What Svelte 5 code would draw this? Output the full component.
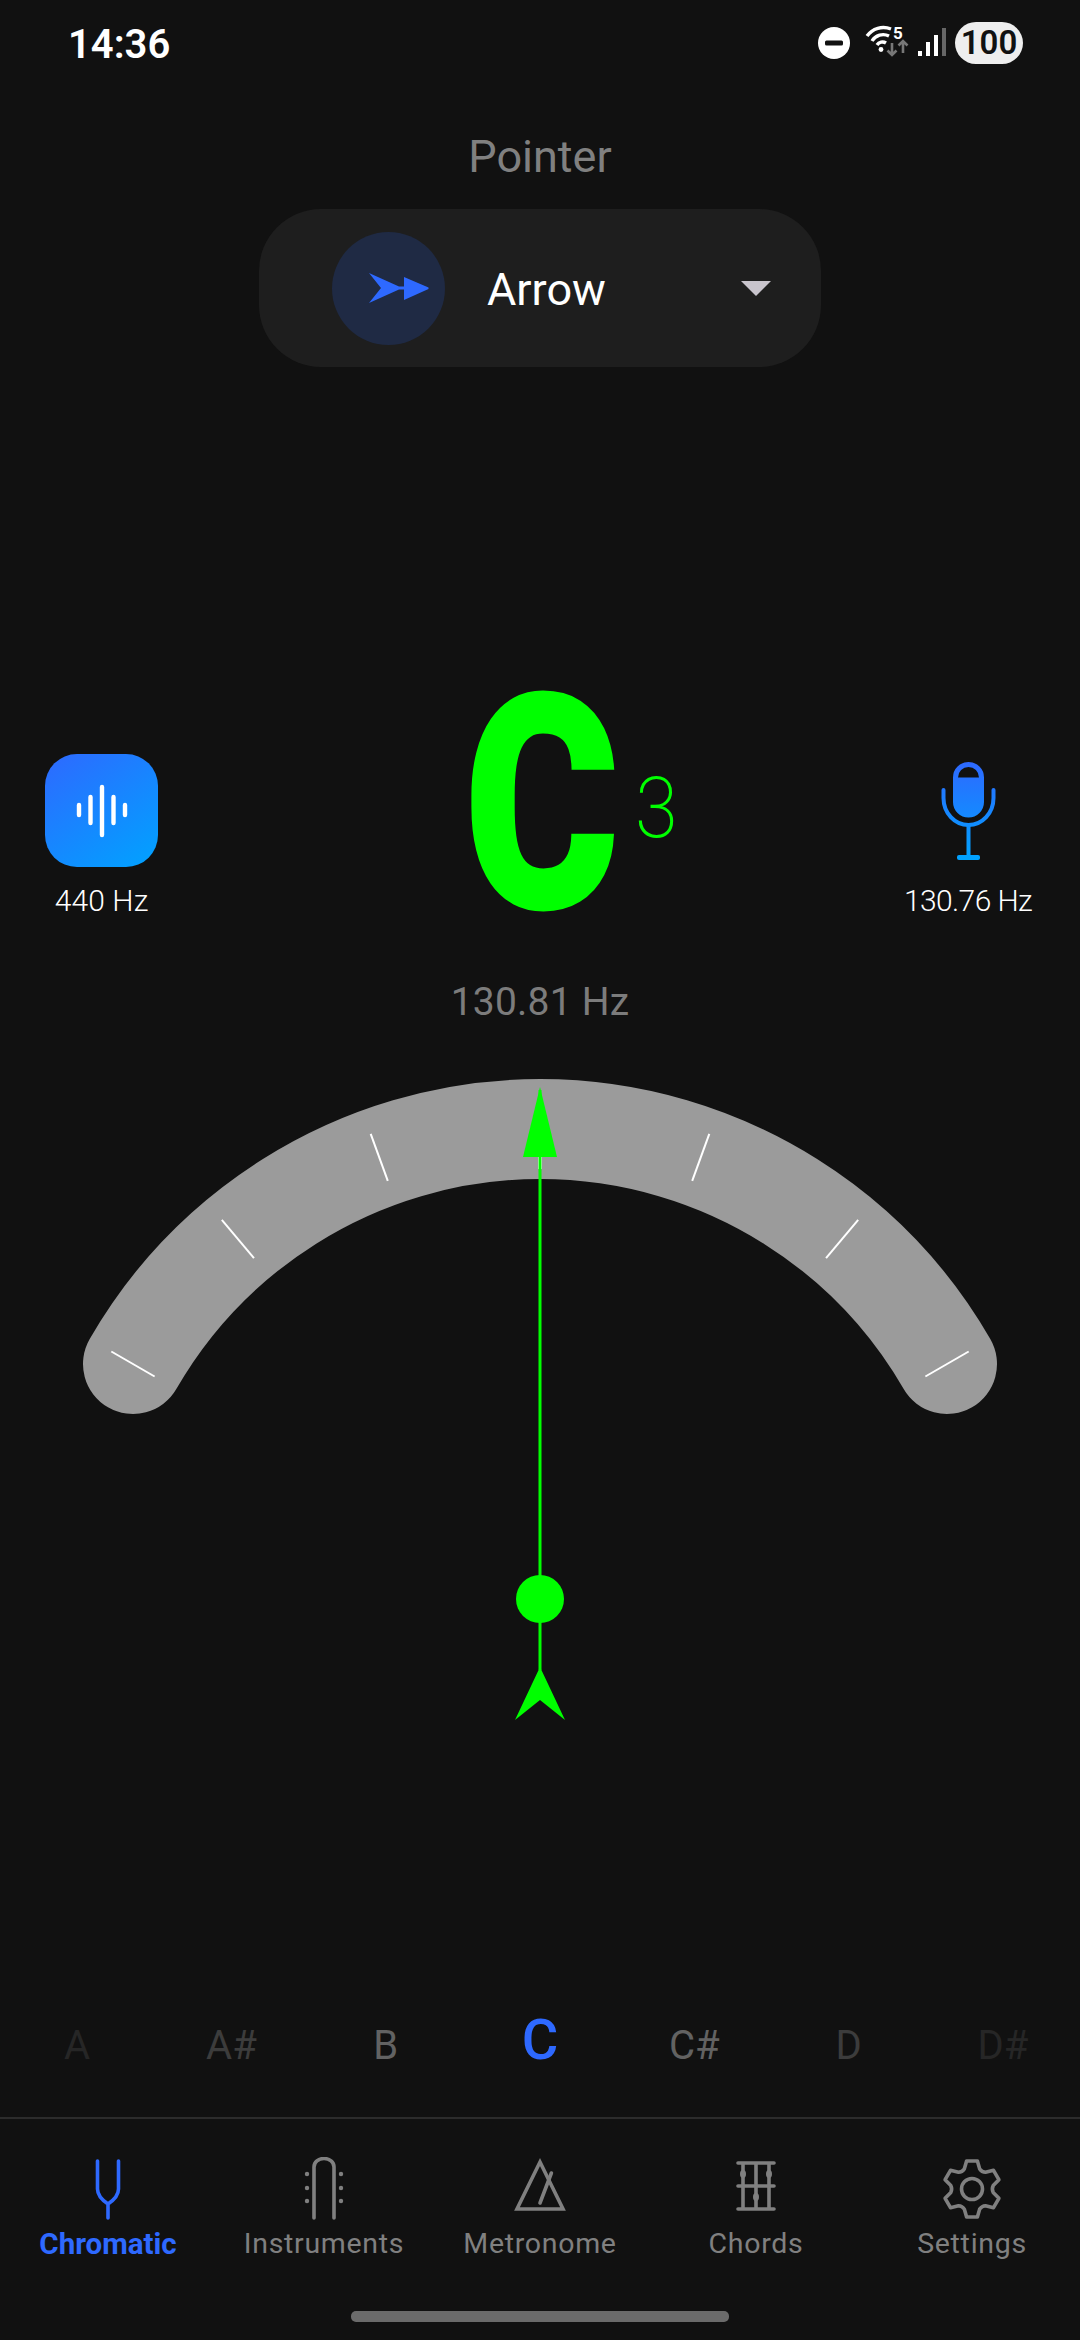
<script>
  const notes = [
    { name: 'A', cls: 'far' },
    { name: 'A#', cls: 'mid' },
    { name: 'B', cls: 'near' },
    { name: 'C', cls: 'active' },
    { name: 'C#', cls: 'near' },
    { name: 'D', cls: 'mid' },
    { name: 'D#', cls: 'far' },
  ];

  const cx = 540;
  const cy = 1599;
  const ticks = [-60, -40, -20, 20, 40, 60].map((deg) => {
    const a = (deg * Math.PI) / 180;
    return {
      x1: cx + 445 * Math.sin(a),
      y1: cy - 445 * Math.cos(a),
      x2: cx + 495 * Math.sin(a),
      y2: cy - 495 * Math.cos(a),
    };
  });

  // settings cog, six teeth starting from the top
  function gearPath() {
    const pt = (r, deg) => {
      const a = ((deg - 90) * Math.PI) / 180;
      return `${(30 + r * Math.cos(a)).toFixed(1)} ${(30 + r * Math.sin(a)).toFixed(1)}`;
    };
    let d = '';
    for (let i = 0; i < 6; i++) {
      const t = i * 60;
      d += `${i ? 'L' : 'M'}${pt(21.5, t - 21)} L${pt(28.5, t - 11)} L${pt(28.5, t + 11)} L${pt(21.5, t + 21)} `;
      d += `Q${pt(19.5, t + 30)} ${pt(21.5, t + 39)} `;
    }
    return d + 'Z';
  }
</script>

<div class="screen">
  <div class="status">
    <span class="time">14:36</span>
    <div class="status-icons">
      <svg class="dnd" width="32" height="32" viewBox="0 0 32 32">
        <circle cx="16" cy="16" r="16" fill="#fff" />
        <rect x="7" y="13.5" width="18" height="5" rx="1.5" fill="#111" />
      </svg>
      <svg class="net" width="44" height="36" viewBox="0 0 44 36">
        <g fill="none" stroke="#fff" stroke-width="3.4" stroke-linecap="butt">
          <path d="M2 11 A20 20 0 0 1 26 4" />
          <path d="M7 16 A13 13 0 0 1 24 11" />
          <path d="M12 20 A6.5 6.5 0 0 1 21 18" />
        </g>
        <circle cx="16" cy="24.5" r="2.4" fill="#fff" />
        <text x="28" y="14" class="net-five">5</text>
        <g fill="none" stroke="#777" stroke-width="2.6">
          <path d="M27 18 V30 M22.5 25.5 L27 30 L31.5 25.5" />
          <path d="M38 28 V16 M33.5 20.5 L38 16 L42.5 20.5" />
        </g>
      </svg>
      <svg class="signal" width="28" height="30" viewBox="0 0 28 30">
        <rect x="0" y="23" width="4" height="5" fill="#fff" />
        <rect x="8" y="14" width="4" height="14" fill="#fff" />
        <rect x="16" y="7" width="4" height="21" fill="#fff" />
        <rect x="24" y="0" width="4" height="28" fill="#666" />
      </svg>
      <span class="battery">100</span>
    </div>
  </div>

  <div class="picker-label">Pointer</div>
  <div class="picker">
    <span class="picker-icon">
      <svg width="62" height="34" viewBox="0 0 62 34">
        <path d="M0 2 L30 15.5 H35 V6 L59.5 16.5 V18 L35 29 V18.5 H30 L0 32 L12 17 Z" fill="#2e69ff" />
      </svg>
    </span>
    <span class="picker-text">Arrow</span>
    <span class="caret"></span>
  </div>

  <div class="tuner">
    <div class="side side-left">
      <div class="ref-btn">
        <svg width="54" height="54" viewBox="0 0 54 54">
          <g stroke="#fff" stroke-width="4.4" stroke-linecap="round">
            <path d="M4 21 V31" />
            <path d="M15.5 13 V39" />
            <path d="M27 3 V51" />
            <path d="M38.5 13 V39" />
            <path d="M50 21 V31" />
          </g>
        </svg>
      </div>
      <span class="side-value wide">440 Hz</span>
    </div>

    <div class="note">
      <span class="note-name">C</span>
      <span class="octave">3</span>
    </div>

    <div class="side side-right">
      <svg class="mic" width="113" height="113" viewBox="0 0 113 113">
        <defs>
          <linearGradient id="micGrad" x1="0" y1="8" x2="0" y2="106" gradientUnits="userSpaceOnUse">
            <stop offset="0" stop-color="#2e69ff" />
            <stop offset="1" stop-color="#00a3ff" />
          </linearGradient>
        </defs>
        <path
          fill-rule="evenodd"
          fill="url(#micGrad)"
          d="M56.5 8 A15.5 15.5 0 0 1 72 23.5 V48 A15.5 15.5 0 0 1 41 48 V23.5 A15.5 15.5 0 0 1 56.5 8 Z M56.5 13 A10.5 10.5 0 0 0 46 23.5 H67 A10.5 10.5 0 0 0 56.5 13 Z"
        />
        <path d="M31.5 36 V44 A25 27 0 0 0 81.5 44 V36" fill="none" stroke="url(#micGrad)" stroke-width="4" stroke-linecap="round" />
        <rect x="54.5" y="70" width="4" height="34" fill="url(#micGrad)" />
        <rect x="45" y="101" width="23" height="5" rx="2" fill="url(#micGrad)" />
      </svg>
      <span class="side-value">130.76 Hz</span>
    </div>
  </div>

  <div class="target-hz">130.81 Hz</div>

  <svg class="gauge" width="1080" height="680" viewBox="0 1060 1080 680">
    <path d="M133 1364 A470 470 0 0 1 947 1364" fill="none" stroke="#9b9b9b" stroke-width="100" stroke-linecap="round" />
    {#each ticks as t}
      <line x1={t.x1} y1={t.y1} x2={t.x2} y2={t.y2} stroke="#fff" stroke-width="2" />
    {/each}
    <rect x="538" y="1150" width="4" height="19" fill="#fff" />
    <rect x="538.5" y="1090" width="3" height="580" fill="#00ff00" />
    <polygon points="540,1087 557,1157 523,1157" fill="#00ff00" />
    <circle cx="540" cy="1599" r="24" fill="#00ff00" />
    <polygon points="540,1667 565,1720 540,1700 515,1720" fill="#00ff00" />
  </svg>

  <div class="notes">
    {#each notes as n}
      <span class="note-cell {n.cls}">{n.name}</span>
    {/each}
  </div>

  <nav class="tabs">
    <div class="tab active">
      <svg width="60" height="64" viewBox="0 0 60 64">
        <path d="M19.5 4 V32 Q19.5 40 30 47 Q40.5 40 40.5 32 V4 M30 47 V61" />
      </svg>
      <span>Chromatic</span>
    </div>
    <div class="tab">
      <svg width="60" height="64" viewBox="0 0 60 64">
        <path d="M20 61 V10 A10 8.5 0 0 1 40 10 V61" />
        <g class="fill">
          <circle cx="13" cy="17" r="2.2" /><circle cx="13" cy="31" r="2.2" /><circle cx="13" cy="44" r="2.2" />
          <circle cx="47" cy="17" r="2.2" /><circle cx="47" cy="31" r="2.2" /><circle cx="47" cy="44" r="2.2" />
        </g>
      </svg>
      <span>Instruments</span>
    </div>
    <div class="tab">
      <svg width="60" height="64" viewBox="0 0 60 64">
        <path d="M30 5 L53 52 H7 Z" />
        <path d="M30 46 L41.4 16" />
      </svg>
      <span>Metronome</span>
    </div>
    <div class="tab">
      <svg width="60" height="64" viewBox="0 0 60 64">
        <path d="M12 6 H48 M12 29 H48 M12 52 H48 M17 6 V52 M30 6 V52 M43 6 V52" />
        <g class="fill">
          <ellipse cx="17" cy="17" rx="3" ry="4" /><ellipse cx="43" cy="17" rx="3" ry="4" /><ellipse cx="30" cy="40" rx="3" ry="4" />
        </g>
      </svg>
      <span>Chords</span>
    </div>
    <div class="tab">
      <svg width="60" height="64" viewBox="0 0 60 60">
        <path d={gearPath()} stroke-linejoin="round" />
        <circle cx="30" cy="30" r="10.5" />
      </svg>
      <span>Settings</span>
    </div>
  </nav>

  <div class="home-bar"></div>
</div>

<style>
  :global(body) {
    background: #111;
  }
  .screen {
    width: 1080px;
    height: 2340px;
    background: #111;
    display: flex;
    flex-direction: column;
    overflow: hidden;
    font-family: Roboto, "Noto Sans", sans-serif;
    color: #fff;
  }

  .status {
    height: 86px;
    flex-shrink: 0;
    display: flex;
    align-items: center;
    justify-content: space-between;
    padding: 0 57px 0 68px;
  }
  .time {
    font-size: 40px;
    font-weight: 600;
    margin-top: 2px;
  }
  .status-icons {
    display: flex;
    align-items: center;
  }
  .net {
    margin-left: 15px;
    overflow: visible;
  }
  .net-five {
    font-size: 17px;
    font-weight: 700;
    fill: #fff;
  }
  .signal {
    margin-left: 9px;
  }
  .battery {
    margin-left: 9px;
    width: 68px;
    height: 42px;
    border-radius: 21px;
    background: #eee;
    color: #111;
    font-size: 33px;
    font-weight: 600;
    line-height: 42px;
    text-align: center;
  }

  .picker-label {
    margin-top: 45px;
    height: 52px;
    line-height: 52px;
    text-align: center;
    font-size: 45px;
    color: #808080;
  }
  .picker {
    margin: 26px auto 0;
    width: 562px;
    height: 158px;
    border-radius: 62px;
    background: #1e1e1e;
    display: flex;
    align-items: center;
    padding: 0 50px 0 73px;
    box-sizing: border-box;
  }
  .picker-icon {
    width: 113px;
    height: 113px;
    border-radius: 50%;
    background: #1f2a44;
    display: flex;
    align-items: center;
    justify-content: center;
    flex-shrink: 0;
  }
  .picker-icon svg {
    margin-left: 22px;
  }
  .picker-text {
    margin-left: 42px;
    font-size: 45px;
    flex: 1;
    margin-top: 2px;
  }
  .caret {
    width: 0;
    height: 0;
    border-left: 15px solid transparent;
    border-right: 15px solid transparent;
    border-top: 15px solid #c8c4cc;
  }

  .tuner {
    margin-top: 325px;
    height: 217px;
    display: grid;
    grid-template-columns: 224px 1fr 224px;
  }
  .side {
    display: flex;
    flex-direction: column;
    align-items: center;
    padding-top: 62px;
  }
  .side-left {
    padding-right: 21px;
  }
  .ref-btn {
    width: 113px;
    height: 113px;
    border-radius: 32px;
    background: linear-gradient(145deg, #2e69ff, #00a3ff);
    display: flex;
    align-items: center;
    justify-content: center;
  }
  .side-value {
    margin-top: 16px;
    font-size: 30px;
    line-height: 36px;
    font-weight: 300;
    letter-spacing: -0.6px;
    color: #fff;
  }
  .side-value.wide {
    letter-spacing: 0.1px;
  }
  .note {
    position: relative;
    display: flex;
    justify-content: center;
  }
  .note-name {
    font-size: 298px;
    line-height: 227px;
    font-weight: 900;
    color: #00ff00;
    -webkit-text-stroke: 3px #00ff00;
    transform: scaleX(0.79);
    margin-left: 3px;
  }
  .octave {
    position: absolute;
    left: 411px;
    top: 73px;
    font-size: 86px;
    line-height: 86px;
    font-weight: 200;
    color: #00ff00;
    transform: scaleX(0.9);
    transform-origin: left center;
  }

  .target-hz {
    margin-top: 69px;
    height: 48px;
    line-height: 48px;
    text-align: center;
    font-size: 39px;
    font-weight: 400;
    letter-spacing: 0.2px;
    color: #7c7c7c;
  }

  .gauge {
    display: block;
    margin-top: 34px;
    flex-shrink: 0;
  }

  .notes {
    margin-top: 260px;
    height: 80px;
    display: grid;
    grid-template-columns: repeat(7, 1fr);
    align-items: baseline;
    text-align: center;
    font-size: 40px;
    line-height: 80px;
  }
  .note-cell.far { color: #262626; }
  .note-cell.mid { color: #3c3c3c; }
  .note-cell.near { color: #626262; }
  .note-cell.active {
    color: #2e69ff;
    font-size: 56px;
    font-weight: 500;
  }

  .tabs {
    margin-top: 37px;
    border-top: 2px solid #2c2c2c;
    padding-top: 38px;
    display: grid;
    grid-template-columns: repeat(5, 1fr);
  }
  .tab {
    display: flex;
    flex-direction: column;
    align-items: center;
    color: #808080;
    font-size: 28.5px;
    letter-spacing: 0.7px;
    line-height: 36px;
  }
  .tab svg {
    fill: none;
    stroke: currentColor;
    stroke-width: 3.6;
    stroke-linecap: round;
    stroke-linejoin: miter;
    margin-bottom: 5px;
  }
  .tab .fill {
    fill: currentColor;
    stroke: none;
  }
  .tab.active {
    color: #2e69ff;
    font-weight: 700;
    font-size: 29.5px;
    letter-spacing: 0;
  }

  .home-bar {
    margin: 49px auto 0;
    width: 378px;
    height: 11px;
    border-radius: 5px;
    background: #6b6b6b;
  }
</style>
